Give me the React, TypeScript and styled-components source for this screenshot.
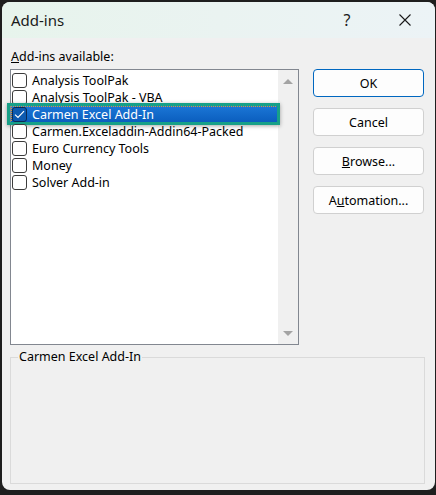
import React from 'react'
import styled, { createGlobalStyle, css } from 'styled-components'

const GlobalStyle = createGlobalStyle`
  html, body {
    margin: 0;
    padding: 0;
    background: #1e1e1e;
  }
  * {
    box-sizing: border-box;
  }
`

const items = [
  { name: 'Analysis ToolPak', checked: false },
  { name: 'Analysis ToolPak - VBA', checked: false },
  { name: 'Carmen Excel Add-In', checked: true },
  { name: 'Carmen.Exceladdin-Addin64-Packed', checked: false },
  { name: 'Euro Currency Tools', checked: false },
  { name: 'Money', checked: false },
  { name: 'Solver Add-in', checked: false },
]

const CheckIcon = () => (
  <svg width="11" height="9" viewBox="0 0 11 9">
    <path d="M1 4.6 L4 7.5 L10 1.2" fill="none" stroke="#fff" strokeWidth="1.2" />
  </svg>
)

const CloseIcon = () => (
  <svg width="12" height="12" viewBox="0 0 12 12">
    <path d="M0.5 0.5 L11.5 11.5 M11.5 0.5 L0.5 11.5" stroke="#1a1a1a" strokeWidth="1.1" />
  </svg>
)

const App: React.FC = () => {
  const selected = 2
  return (
    <>
      <GlobalStyle />
      <Frame>
        <Window>
          <TitleBar>
            <Title>Add-ins</Title>
            <TitleButtons>
              <HelpMark>?</HelpMark>
              <CloseBox>
                <CloseIcon />
              </CloseBox>
            </TitleButtons>
          </TitleBar>
          <Body>
            <TopRow>
              <ListColumn>
                <Label><u>A</u>dd-ins available:</Label>
                <ListBox>
                  <Items>
                    {items.map((item, i) => (
                      <Row key={item.name} $selected={i === selected}>
                        <Check $selected={i === selected}>
                          {item.checked && <CheckIcon />}
                        </Check>
                        <ItemText>{item.name}</ItemText>
                      </Row>
                    ))}
                  </Items>
                  <ScrollBar>
                    <ArrowUp />
                    <ArrowDown />
                  </ScrollBar>
                </ListBox>
              </ListColumn>
              <Buttons>
                <Button $default>OK</Button>
                <Button>Cancel</Button>
                <Button><u>B</u>rowse...</Button>
                <Button>A<u>u</u>tomation...</Button>
              </Buttons>
            </TopRow>
            <GroupBox>
              <Legend>Carmen Excel Add-In</Legend>
            </GroupBox>
          </Body>
        </Window>
      </Frame>
    </>
  )
}

const Frame = styled.div`
  width: 436px;
  height: 495px;
  padding: 2px 1px 5px 2px;
  background: #1e1e1e;
`

const Window = styled.div`
  height: 100%;
  display: flex;
  flex-direction: column;
  background: #f0f0f0;
  border-radius: 8px;
  overflow: hidden;
  font-family: 'Noto Sans', 'Segoe UI', sans-serif;
  color: #000;
`

const TitleBar = styled.div`
  height: 36px;
  flex: none;
  display: flex;
  align-items: center;
  justify-content: space-between;
  padding: 0 20px 0 9px;
  background: linear-gradient(90deg, #e7f4ec 0%, #eaf3f1 50%, #ecf3f6 100%);
`

const Title = styled.span`
  font-size: 15px;
  color: #1a1a1a;
`

const TitleButtons = styled.div`
  display: flex;
  align-items: center;
  gap: 38px;
  height: 100%;
`

const HelpMark = styled.span`
  width: 20px;
  text-align: center;
  font-size: 16px;
  color: #1a1a1a;
`

const CloseBox = styled.span`
  width: 20px;
  display: flex;
  align-items: center;
  justify-content: center;
`

const Body = styled.div`
  flex: 1;
  display: flex;
  flex-direction: column;
  padding: 9px 9px 6px 8px;
`

const TopRow = styled.div`
  display: flex;
  gap: 14px;
`

const ListColumn = styled.div`
  display: flex;
  flex-direction: column;
`

const Label = styled.div`
  font-size: 12.5px;
  line-height: 16px;
  height: 22px;
  padding-left: 1px;
  padding-top: 2px;
  color: #000;
`

const ListBox = styled.div`
  width: 289px;
  height: 276px;
  display: flex;
  border: 1px solid #828790;
  background: #fff;
`

const Items = styled.div`
  flex: 1;
  padding-top: 2px;
`

const Row = styled.div<{ $selected?: boolean }>`
  position: relative;
  height: 17px;
  display: flex;
  align-items: center;
  padding-left: 1px;
  font-size: 12.5px;
  color: #000;
  ${p => p.$selected && css`
    background: linear-gradient(#1b76d6, #0a5dbd);
    color: #fff;
    outline: 1px dotted #d99a3a;
    outline-offset: -1px;
    &::after {
      content: '';
      position: absolute;
      left: -4px;
      right: -2px;
      top: -3px;
      bottom: -2px;
      border: 3px solid #17a088;
      box-shadow: 0 1px 4px rgba(0, 0, 0, 0.35);
    }
  `}
`

const Check = styled.span<{ $selected?: boolean }>`
  width: 15px;
  height: 15px;
  flex: none;
  display: flex;
  align-items: center;
  justify-content: center;
  border: 1px solid #3c3c3c;
  border-radius: 3px;
  background: #fff;
  ${p => p.$selected && css`
    background: #0d5ab0;
    border-color: #0a2a55;
  `}
`

const ItemText = styled.span`
  margin-left: 5px;
  white-space: nowrap;
`

const ScrollBar = styled.div`
  width: 20px;
  flex: none;
  background: #f0f0f0;
  display: flex;
  flex-direction: column;
  justify-content: space-between;
  align-items: center;
  padding: 9px 0 8px;
`

const triangle = css`
  width: 0;
  height: 0;
  border-left: 5px solid transparent;
  border-right: 5px solid transparent;
`

const ArrowUp = styled.span`
  ${triangle};
  border-bottom: 5px solid #a3a3a3;
`

const ArrowDown = styled.span`
  ${triangle};
  border-top: 5px solid #a3a3a3;
`

const Buttons = styled.div`
  display: flex;
  flex-direction: column;
  gap: 11px;
  padding-top: 22px;
`

const Button = styled.button<{ $default?: boolean }>`
  width: 111px;
  height: 28px;
  font-family: inherit;
  font-size: 12.5px;
  color: #000;
  background: #fdfdfd;
  border: 1px solid #d0d0d0;
  border-radius: 4px;
  padding: 0;
  ${p => p.$default && css`
    border-color: #0067c0;
  `}
`

const GroupBox = styled.fieldset`
  margin: 4px 0 0 0;
  width: 415px;
  flex: 1;
  border: 1px solid #dadada;
  padding: 0;
`

const Legend = styled.legend`
  font-size: 12.5px;
  line-height: 16px;
  margin-left: 7px;
  padding: 0 1px;
  color: #000;
`

export default App
